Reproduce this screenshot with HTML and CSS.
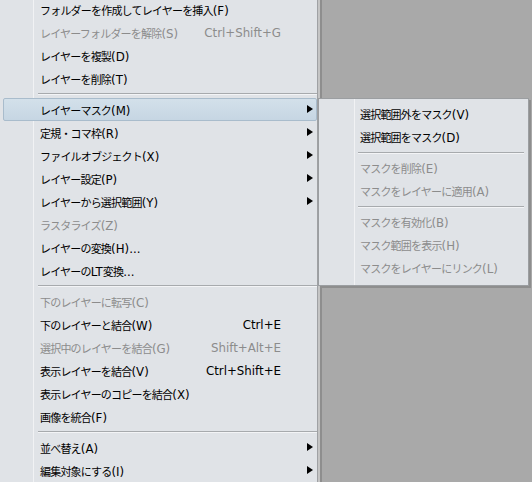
FILE: index.html
```html
<!DOCTYPE html>
<html lang="ja">
<head>
<meta charset="utf-8">
<link rel="stylesheet" href="styles.css">
</head>
<body>
<div class="menu">
  <div class="row"><span class="label">フォルダーを作成してレイヤーを挿入<span class="en">(F)</span></span></div>
  <div class="row off"><span class="label">レイヤーフォルダーを解除<span class="en">(S)</span></span><span class="key en">Ctrl+Shift+G</span></div>
  <div class="row"><span class="label">レイヤーを複製<span class="en">(D)</span></span></div>
  <div class="row"><span class="label">レイヤーを削除<span class="en">(T)</span></span></div>
  <div class="sep"></div>
  <div class="row hover"><span class="label">レイヤーマスク<span class="en">(M)</span></span><span class="arr"><i class="tri"></i></span></div>
  <div class="row"><span class="label">定規・コマ枠<span class="en">(R)</span></span><span class="arr"><i class="tri"></i></span></div>
  <div class="row"><span class="label">ファイルオブジェクト<span class="en">(X)</span></span><span class="arr"><i class="tri"></i></span></div>
  <div class="row"><span class="label">レイヤー設定<span class="en">(P)</span></span><span class="arr"><i class="tri"></i></span></div>
  <div class="row"><span class="label">レイヤーから選択範囲<span class="en">(Y)</span></span><span class="arr"><i class="tri"></i></span></div>
  <div class="row off"><span class="label">ラスタライズ<span class="en">(Z)</span></span></div>
  <div class="row"><span class="label">レイヤーの変換<span class="en">(H)...</span></span></div>
  <div class="row"><span class="label">レイヤーの<span class="en">LT</span>変換<span class="en">...</span></span></div>
  <div class="sep"></div>
  <div class="row off"><span class="label">下のレイヤーに転写<span class="en">(C)</span></span></div>
  <div class="row"><span class="label">下のレイヤーと結合<span class="en">(W)</span></span><span class="key en">Ctrl+E</span></div>
  <div class="row off"><span class="label">選択中のレイヤーを結合<span class="en">(G)</span></span><span class="key en">Shift+Alt+E</span></div>
  <div class="row"><span class="label">表示レイヤーを結合<span class="en">(V)</span></span><span class="key en">Ctrl+Shift+E</span></div>
  <div class="row"><span class="label">表示レイヤーのコピーを結合<span class="en">(X)</span></span></div>
  <div class="row"><span class="label">画像を統合<span class="en">(F)</span></span></div>
  <div class="sep"></div>
  <div class="row"><span class="label">並べ替え<span class="en">(A)</span></span><span class="arr"><i class="tri"></i></span></div>
  <div class="row"><span class="label">編集対象にする<span class="en">(I)</span></span><span class="arr"><i class="tri"></i></span></div>
</div>

<div class="submenu">
  <div class="srow">選択範囲外をマスク<span class="en">(V)</span></div>
  <div class="srow">選択範囲をマスク<span class="en">(D)</span></div>
  <div class="ssep"></div>
  <div class="srow off">マスクを削除<span class="en">(E)</span></div>
  <div class="srow off">マスクをレイヤーに適用<span class="en">(A)</span></div>
  <div class="ssep"></div>
  <div class="srow off">マスクを有効化<span class="en">(B)</span></div>
  <div class="srow off">マスク範囲を表示<span class="en">(H)</span></div>
  <div class="srow off">マスクをレイヤーにリンク<span class="en">(L)</span></div>
</div>
</body>
</html>
```

FILE: styles.css
```css
html, body {
  margin: 0;
  padding: 0;
}
body {
  width: 532px;
  height: 482px;
  overflow: hidden;
  background: #a9a9a9;
  font-family: "Noto Sans CJK JP", "Noto Sans", sans-serif;
  font-size: 11px;
  letter-spacing: -0.8px;
  color: #000;
  position: relative;
}
.en {
  font-family: "DejaVu Sans", sans-serif;
  font-size: 11.8px;
  letter-spacing: 0;
}
.menu {
  width: 317px;
  height: 490px;
  margin-top: -2px;
  background-color: #e0e3e7;
  background-image: linear-gradient(to right, transparent 33px, #f1f2f4 33px, #f1f2f4 34px, transparent 34px);
  border-right: 1px solid #9fa1a4;
  box-shadow: 2px 0 0 #c4c4c4, 4px 0 0 #8e8e8e;
}
.row {
  display: flex;
  align-items: center;
  height: 21px;
  margin-left: 3px;
  width: 276px;
  padding-left: 36px;
  border: 1px solid transparent;
  border-radius: 2px;
  white-space: nowrap;
  position: relative;
}
.row.hover {
  background: linear-gradient(#d3e0ea, #c6d6e3);
  border-color: #a9bccc;
}
.label {
  flex: 1;
}
.key {
  text-align: right;
  margin-right: 35px;
}
.off {
  color: #8c8c8c;
}
.arr {
  position: absolute;
  left: 303px;
  top: 6px;
  width: 6px;
  height: 9px;
}
.tri {
  display: block;
  width: 0;
  height: 0;
  border-left: 6px solid #000;
  border-top: 4.5px solid transparent;
  border-bottom: 4.5px solid transparent;
}
.sep {
  height: 8px;
  margin-left: 38px;
  box-sizing: border-box;
  padding-top: 3px;
}
.sep::before {
  content: "";
  display: block;
  height: 1px;
  background: #a7aaad;
  border-bottom: 1px solid #f3f4f6;
}
.submenu {
  position: absolute;
  left: 318px;
  top: 98px;
  width: 209px;
  height: 182px;
  padding-top: 4px;
  box-sizing: content-box;
  background-color: #e0e3e7;
  background-image: linear-gradient(to right, transparent 35px, #f1f2f4 35px, #f1f2f4 36px, transparent 36px);
  border: 1px solid #9b9ea1;
  box-shadow: 2px 2px 0 #8e8e8e;
}
.srow {
  height: 23px;
  line-height: 23px;
  padding-left: 41px;
  white-space: nowrap;
}
.ssep {
  height: 8px;
  margin-left: 39px;
  margin-right: 4px;
  box-sizing: border-box;
  padding-top: 3px;
}
.ssep::before {
  content: "";
  display: block;
  height: 1px;
  background: #a7aaad;
  border-bottom: 1px solid #f3f4f6;
}
```
